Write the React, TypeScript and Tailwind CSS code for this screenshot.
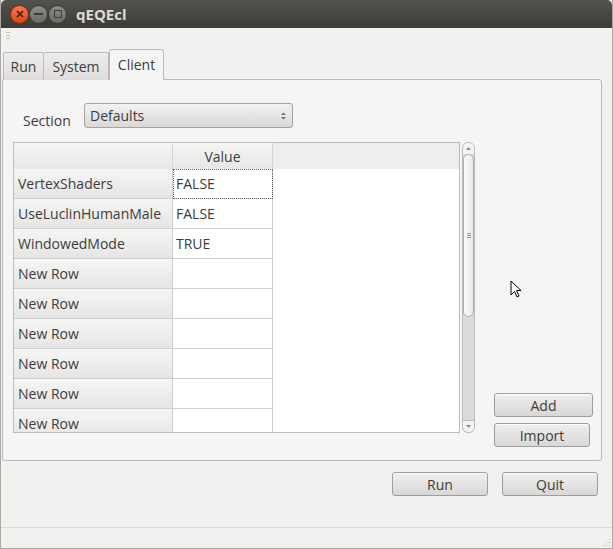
import React from "react";

const font = { fontFamily: '"Open Sans", "DejaVu Sans", sans-serif' };

function Btn({ label, w }: { label: string; w: string }) {
  return (
    <div
      className={`${w} h-[24px] flex items-center justify-center rounded-[3px] border border-[#9d9d9b] bg-gradient-to-b from-[#f0efee] to-[#d9d8d6] text-[14px] text-[#3c3c3c] shadow-[inset_0_1px_0_#fff]`}
    >
      {label}
    </div>
  );
}

const rows = [
  ["VertexShaders", "FALSE"],
  ["UseLuclinHumanMale", "FALSE"],
  ["WindowedMode", "TRUE"],
  ["New Row", ""],
  ["New Row", ""],
  ["New Row", ""],
  ["New Row", ""],
  ["New Row", ""],
  ["New Row", ""],
];

export default function App() {
  return (
    <div
      style={font}
      className="w-[613px] h-[549px] flex flex-col bg-[#f2f1f0] text-[#3c3c3c] overflow-hidden relative border-x border-b border-[#aaa9a6]"
    >
      {/* Title bar */}
      <div className="h-[28px] shrink-0 flex items-center bg-gradient-to-b from-[#53524c] to-[#3c3b37] rounded-t-[5px] pl-[9px]">
        <div className="w-[19px] h-[19px] rounded-full bg-gradient-to-b from-[#f7784c] to-[#d9461c] border border-[#7e2c12] flex items-center justify-center">
          <svg width="8" height="8" viewBox="0 0 8 8">
            <path d="M1 1 L7 7 M7 1 L1 7" stroke="#4a1a08" strokeWidth="1.6" />
          </svg>
        </div>
        <div className="w-[19px] h-[19px] rounded-full bg-gradient-to-b from-[#8f8d88] to-[#6a6964] border border-[#3a3935] flex items-center justify-center">
          <div className="w-[9px] h-[2px] bg-[#3c3b37]" />
        </div>
        <div className="w-[19px] h-[19px] rounded-full bg-gradient-to-b from-[#8f8d88] to-[#6a6964] border border-[#3a3935] flex items-center justify-center">
          <div className="w-[8px] h-[8px] border-[1.5px] border-[#3c3b37]" />
        </div>
        <div className="ml-[9px] text-[15px] font-bold text-[#dfdbd2]">qEQEcl</div>
      </div>

      {/* Toolbar handle */}
      <div className="h-[21px] shrink-0 pl-[5px] pt-[4px]">
        <div className="flex flex-col gap-[2px]">
          <div className="w-[4px] h-[1px] bg-[#c4c3c0]" />
          <div className="w-[4px] h-[1px] bg-[#c4c3c0]" />
          <div className="w-[4px] h-[1px] bg-[#c4c3c0]" />
        </div>
      </div>

      {/* Tabs */}
      <div className="h-[30px] shrink-0 flex items-end pl-[2px] relative z-10">
        <div className="h-[28px] w-[41px] flex items-center justify-center border border-b-0 border-[#bcbbb8] rounded-t-[2px] bg-gradient-to-b from-[#eeeded] to-[#dedddb] text-[14px] mb-[-1px]">
          Run
        </div>
        <div className="h-[28px] w-[65px] flex items-center justify-center border border-b-0 border-l-0 border-[#bcbbb8] rounded-t-[2px] bg-gradient-to-b from-[#eeeded] to-[#dedddb] text-[14px] mb-[-1px]">
          System
        </div>
        <div className="h-[31px] w-[55px] flex items-center justify-center border border-b-0 border-[#bcbbb8] rounded-t-[3px] bg-[#f5f5f5] text-[14px] pb-[1px] mb-[-1px]">
          Client
        </div>
      </div>

      {/* Tab pane */}
      <div className="ml-[1px] w-[600px] h-[382px] shrink-0 border border-[#bcbbb8] rounded-b-[3px] rounded-tr-[3px] bg-[#f5f5f5] flex flex-col pl-[10px] pt-[23px]">
        <div className="flex items-center h-[25px]">
          <div className="w-[71px] pl-[10px] pt-[9px] text-[14px]">Section</div>
          <div className="w-[209px] h-[25px] rounded-[3px] border border-[#a5a4a1] bg-gradient-to-b from-[#f2f2f1] to-[#dad9d7] flex items-center justify-between pl-[5px] pr-[5px] text-[14px]">
            <span>Defaults</span>
            <svg width="7" height="10" viewBox="0 0 7 10">
              <path d="M1 4 L3.5 1.5 L6 4 Z M1 6 L3.5 8.5 L6 6 Z" fill="#6e6e6c" />
            </svg>
          </div>
        </div>

        <div className="flex mt-[14px]">
          {/* Table */}
          <div className="w-[447px] h-[291px] border border-[#bdbdbb] bg-white overflow-hidden flex flex-col">
            <div className="h-[26px] shrink-0 flex bg-[#efeeed] text-[14px]">
              <div className="w-[159px] border-r border-[#d6d5d3] bg-gradient-to-b from-[#f5f5f4] to-[#e8e7e6]" />
              <div className="w-[100px] border-r border-[#d6d5d3] flex items-center justify-center bg-gradient-to-b from-[#f5f5f4] to-[#e8e7e6]">
                Value
              </div>
              <div className="flex-1" />
            </div>
            {rows.map(([k, v], i) => (
              <div key={i} className="h-[30px] shrink-0 flex text-[14px]">
                <div className="w-[159px] border-r border-b border-[#cfcfcd] bg-gradient-to-b from-[#f6f6f5] to-[#e6e5e4] flex items-center pl-[4px]">
                  {k}
                </div>
                <div
                  className={`w-[100px] border-r border-b border-[#cfcfcd] flex items-center pl-[3px] ${
                    i === 0 ? "outline-1 outline-dotted outline-[#6a6a6a] -outline-offset-1" : ""
                  }`}
                >
                  {v}
                </div>
              </div>
            ))}
          </div>

          {/* Scrollbar */}
          <div className="ml-[2px] w-[13px] h-[291px] rounded-[6px] border border-[#bdbcb9] bg-[#dcdbd9] flex flex-col overflow-hidden">
            <div className="h-[11px] shrink-0 bg-[#f4f4f3] flex items-center justify-center">
              <svg width="5" height="3" viewBox="0 0 5 3">
                <path d="M0 3 L2.5 0 L5 3 Z" fill="#8a8a88" />
              </svg>
            </div>
            <div className="h-[163px] shrink-0 rounded-[6px] border border-[#b0afac] bg-gradient-to-r from-[#fbfbfb] to-[#e9e8e7] flex flex-col items-center justify-center gap-[1px]">
              <div className="w-[4px] h-[1px] bg-[#999]" />
              <div className="w-[4px] h-[1px] bg-[#999]" />
              <div className="w-[4px] h-[1px] bg-[#999]" />
            </div>
            <div className="flex-1" />
            <div className="h-[12px] shrink-0 bg-[#f4f4f3] rounded-b-[6px] border-t border-[#bdbcb9] flex items-center justify-center">
              <svg width="5" height="3" viewBox="0 0 5 3">
                <path d="M0 0 L2.5 3 L5 0 Z" fill="#8a8a88" />
              </svg>
            </div>
          </div>

          {/* Right column */}
          <div className="ml-[19px] flex flex-col justify-end gap-[6px] h-[305px]">
            <Btn label="Add" w="w-[99px]" />
            <Btn label="Import" w="w-[96px]" />
          </div>
        </div>
      </div>

      {/* Bottom buttons */}
      <div className="flex justify-end gap-[14px] pr-[14px] pt-[11px]">
        <Btn label="Run" w="w-[96px]" />
        <Btn label="Quit" w="w-[96px]" />
      </div>

      <div className="flex-1" />
      {/* Status bar */}
      <div className="h-[21px] shrink-0 border-t border-[#d8d7d5] relative">
        <div className="absolute right-[2px] bottom-[2px] grid grid-cols-3 gap-[2px]">
          {[0, 1, 2, 3, 4, 5, 6, 7, 8].map((n) => (
            <div
              key={n}
              className={`w-[1px] h-[1px] ${[0, 1, 3].includes(n) ? "bg-transparent" : "bg-[#b8b7b4]"}`}
            />
          ))}
        </div>
      </div>

      {/* Mouse cursor */}
      <svg className="absolute left-[509px] top-[280px]" width="12" height="19" viewBox="0 0 12 19">
        <path d="M1 1 L1 15 L4.5 11.5 L7 17 L9 16 L6.5 10.5 L11 10.5 Z" fill="#fff" stroke="#000" strokeWidth="1" strokeLinejoin="round" />
      </svg>
    </div>
  );
}
